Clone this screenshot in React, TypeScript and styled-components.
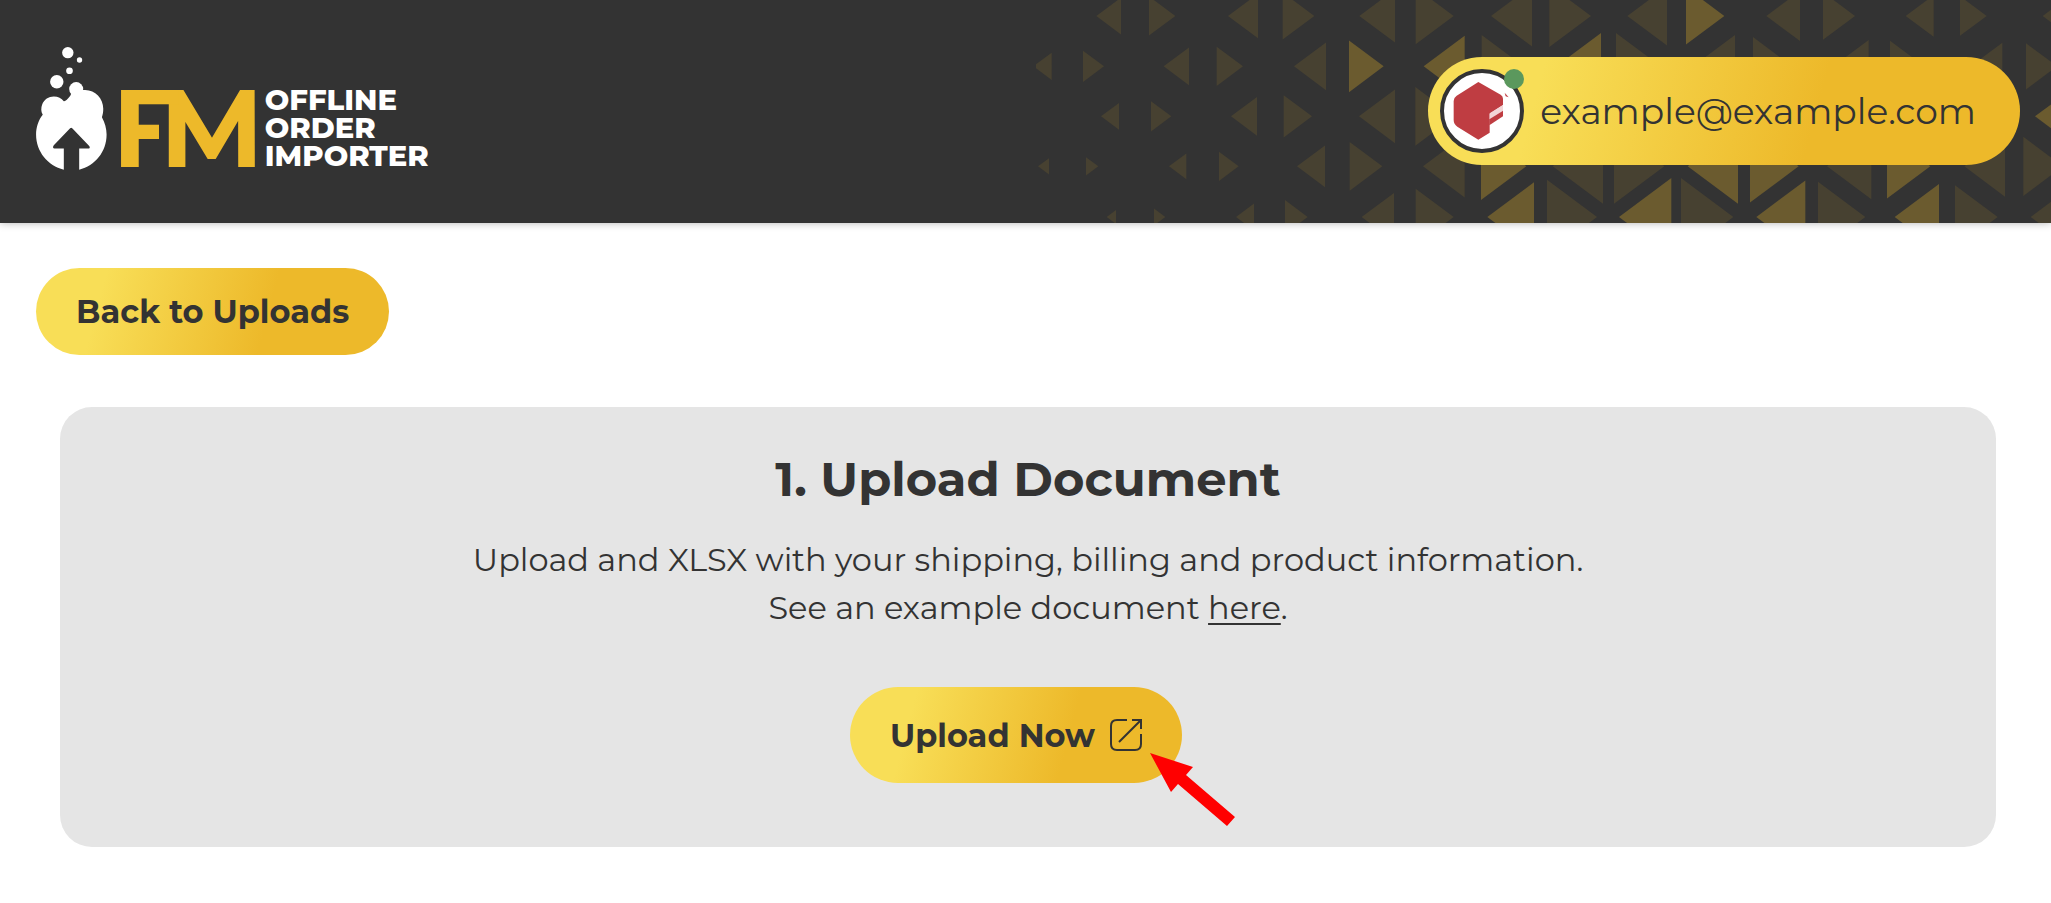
import React from "react";
import styled, { createGlobalStyle } from "styled-components";

const ink = "#333333";
const gold = "#edb92a";
const goldGradient = "linear-gradient(105deg, #f8de57 19%, #edb92a 65%)";

const GlobalStyle = createGlobalStyle`
  * { box-sizing: border-box; }
  body {
    margin: 0;
    background: #ffffff;
    color: ${ink};
    font-family: Montserrat, Inter, "Liberation Sans", sans-serif;
  }
`;

const Header = styled.header`
  position: relative;
  display: flex;
  align-items: center;
  justify-content: space-between;
  min-height: 223px;
  padding: 0 31px 2px 36px;
  background: ${ink};
  box-shadow: 0 0 8px rgba(0, 0, 0, 0.3);
`;

const Pattern = styled.svg`
  position: absolute;
  top: 0;
  right: 0;
  width: 1015px;
  height: 100%;
`;

const Logo = styled.a`
  display: flex;
  align-items: flex-end;
  padding-bottom: 4px;
  color: #ffffff;
  text-decoration: none;
`;

const Flask = styled.svg`
  width: 71px;
  height: 123px;
`;

const Monogram = styled.span`
  display: flex;
  margin-left: 5px;
  color: ${gold};
  font-size: 109px;
  font-weight: 700;
  line-height: 84px;
`;

/* The middle bar of the F is cut short so that it stays clear of the M. */
const MonogramHead = styled.span`
  clip-path: polygon(0 0, 100% 0, 100% 30%, 47px 30%, 47px 100%, 0 100%);
`;

const MonogramTail = styled.span`
  margin-left: -22px;
`;

const LogoName = styled.span`
  margin-left: 1px;
  font-size: 29px;
  font-weight: 800;
  line-height: 28px;
`;

const Account = styled.button`
  position: relative;
  display: flex;
  align-items: center;
  gap: 16px;
  height: 108px;
  padding: 0 44px 0 12px;
  border: 0;
  border-radius: 54px;
  background: ${goldGradient};
  color: ${ink};
  font-family: inherit;
  font-size: 36px;
  font-weight: 400;
`;

const Avatar = styled.span`
  position: relative;
  width: 84px;
  height: 84px;
  border: 4px solid ${ink};
  border-radius: 50%;
  background: #ffffff;
`;

const AvatarMark = styled.svg`
  display: block;
  width: 76px;
  height: 76px;
`;

const Status = styled.span`
  position: absolute;
  top: -4px;
  right: -4px;
  width: 20px;
  height: 20px;
  border-radius: 50%;
  background: #5b985d;
`;

const Main = styled.main`
  padding: 45px 55px 56px 36px;
`;

const PillLink = styled.a<{ $tall?: boolean }>`
  position: relative;
  display: inline-flex;
  align-items: center;
  gap: 15px;
  height: ${(p) => (p.$tall ? 96 : 87)}px;
  padding: 0 40px;
  border-radius: 48px;
  background: ${goldGradient};
  color: ${ink};
  font-size: 32px;
  font-weight: 700;
  text-decoration: none;
`;

const Card = styled.section`
  display: flex;
  flex-direction: column;
  align-items: center;
  margin: 52px 0 0 24px;
  padding: 40px 40px 64px;
  border-radius: 32px;
  background: #e5e5e5;
  text-align: center;
`;

const Title = styled.h1`
  margin: 0;
  font-size: 48px;
  font-weight: 700;
  line-height: 64px;
`;

const Copy = styled.p`
  margin: 25px 0 0;
  font-size: 32px;
  font-weight: 400;
  line-height: 48px;
`;

const TextLink = styled.a`
  color: inherit;
  text-decoration: underline;
  text-decoration-thickness: 2px;
  text-underline-offset: 4px;
`;

const Action = styled.div`
  margin: 55px 24px 0 0;
`;

const OpenIcon = styled.svg`
  width: 32px;
  height: 32px;
`;

const Pointer = styled.svg`
  position: absolute;
  top: 65px;
  left: calc(100% - 32px);
  width: 86px;
  height: 75px;
`;

// Each triangle: tip x, base x, and whether it is highlighted.
type Triangle = [tip: number, base: number, bright?: boolean];

const rows: { y: number; triangles: Triangle[] }[] = [
  { y: 48, triangles: [[229, 303], [466, 387], [624, 714], [883, 788], [1018, 1125], [1301, 1187], [1413, 1536], [1713, 1588], [1822, 1941], [2113, 1998, true], [2239, 2340], [2505, 2409], [2657, 2741], [2900, 2820], [3068, 3150]] },
  { y: 199, triangles: [[40, 95], [252, 189], [431, 507], [669, 590], [822, 918], [1091, 987, true], [1211, 1334, true], [1511, 1385], [1609, 1743, true], [1922, 1788], [2019, 2145], [2317, 2199], [2440, 2546], [2713, 2610], [2852, 2947], [3111, 3018]] },
  { y: 349, triangles: [[243, 297], [454, 393], [633, 711], [876, 791], [1017, 1125], [1304, 1186], [3045, 3155, true]] },
  { y: 499, triangles: [[54, 87], [235, 198], [447, 499], [656, 597], [831, 915], [1087, 989], [1209, 1334], [1519, 1383, true], [1598, 1749], [1933, 1782], [2003, 2154, true], [2336, 2190, true], [2421, 2554], [2731, 2601, true], [2833, 2955], [3129, 3010]] },
  { y: 651, triangles: [[260, 288], [436, 402], [648, 702], [863, 795], [1025, 1122], [1301, 1187], [1402, 1542, true], [1731, 1581], [1797, 1954, true], [2140, 1983], [2209, 2356, true], [2536, 2394], [2624, 2757, true], [2933, 2805], [3032, 3150]] },
];

function HeaderPattern() {
  return (
    <Pattern viewBox="48 0 3045 669" preserveAspectRatio="xMaxYMin slice" aria-hidden="true">
      {rows.map(({ y, triangles }) =>
        triangles.map(([tip, base, bright]) => {
          const half = Math.abs(base - tip) * 0.745;
          return (
            <path
              key={`${y}-${tip}`}
              d={`M${tip} ${y}L${base} ${y - half}V${y + half}Z`}
              fill={bright ? "#6b5b2f" : "#474131"}
            />
          );
        })
      )}
    </Pattern>
  );
}

function FlaskLogo() {
  return (
    <Flask viewBox="108 80 212 368" aria-hidden="true">
      <g fill="#ffffff">
        <circle cx="203" cy="97" r="17" />
        <circle cx="238" cy="119" r="8" />
        <circle cx="208" cy="151" r="10" />
        <circle cx="170" cy="184" r="20" />
        <circle cx="228" cy="206" r="21" />
        <path d="M128 283C122 273 123 262 126 253C132 236 146 228 161 228C174 228 184 233 191 242C196 243 203 235 208 229C212 224 212 220 216 216C226 210 240 209 255 209C285 209 309 234 309 265C309 274 308 282 305 290C314 306 319 324 319 342C319 393 285 436 237 447V384H264C269 384 270 380 267 376L219 326C215 320 211 320 207 326L161 374C157 380 159 384 163 384H191V447C143 436 108 393 108 342C108 321 115 299 128 283Z" />
      </g>
    </Flask>
  );
}

export default function App() {
  return (
    <>
      <GlobalStyle />
      <Header>
        <HeaderPattern />
        <Logo href="#">
          <FlaskLogo />
          <Monogram>
            <MonogramHead>F</MonogramHead>
            <MonogramTail>M</MonogramTail>
          </Monogram>
          <LogoName>
            OFFLINE
            <br />
            ORDER
            <br />
            IMPORTER
          </LogoName>
        </Logo>
        <Account type="button">
          <Avatar>
            <AvatarMark viewBox="1272 219 228 228" aria-hidden="true">
              <path d="M1375 246L1442 284Q1449 288 1449 296V315L1409 341V376V398L1375 419L1312 380Q1301 372 1301 360V303Q1301 293 1310 287Z" fill="#bf3d42" />
              <path d="M1409 340L1449 315V332L1409 358Z" fill="#f2d6d7" />
              <path d="M1408 358L1449 332V349L1408 376Z" fill="#bf3d42" />
              <path d="M1454 278L1466 292L1457 289Z" fill="#bf3d42" />
            </AvatarMark>
            <Status />
          </Avatar>
          example@example.com
        </Account>
      </Header>
      <Main>
        <PillLink href="#uploads">Back to Uploads</PillLink>
        <Card>
          <Title>1. Upload Document</Title>
          <Copy>
            Upload and XLSX with your shipping, billing and product information.
            <br />
            See an example document <TextLink href="#example">here</TextLink>.
          </Copy>
          <Action>
            <PillLink href="#upload" $tall>
              Upload Now
              <OpenIcon viewBox="0 0 32 32" fill="none" stroke={ink} strokeWidth="2" aria-hidden="true">
                <path d="M17 1H7Q1 1 1 7V25Q1 31 7 31H25Q31 31 31 25V15" />
                <path d="M22 1H31V10M31 1L9 23" />
              </OpenIcon>
              <Pointer viewBox="0 0 86 75" aria-hidden="true">
                <path d="M0 1L43 15L36 23L85 65L77 74L28 32L21 40Z" fill="#ff0000" />
              </Pointer>
            </PillLink>
          </Action>
        </Card>
      </Main>
    </>
  );
}
